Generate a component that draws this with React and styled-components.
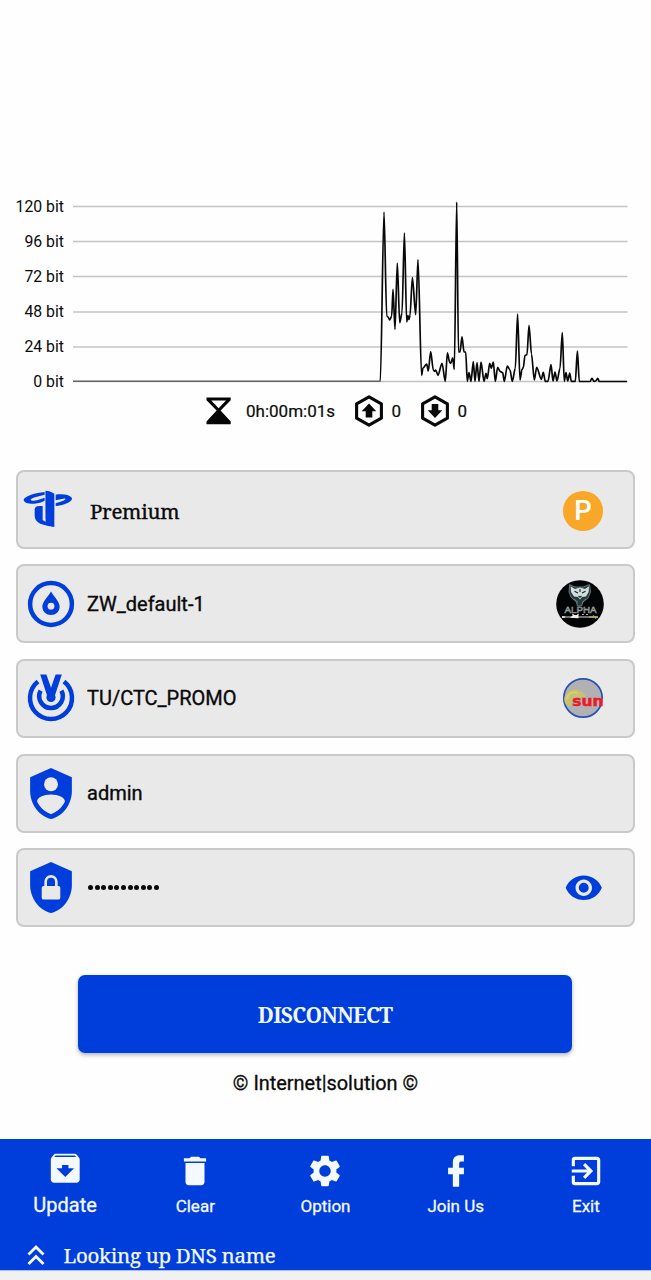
import React from "react";
import styled, { createGlobalStyle } from "styled-components";
import {
  MdArchive,
  MdDelete,
  MdSettings,
  MdExitToApp,
  MdRemoveRedEye,
  MdKeyboardDoubleArrowUp,
} from "react-icons/md";

const BLUE = "#003edb";
const SERIF = `"Noto Serif", "DejaVu Serif Condensed", "DejaVu Serif", serif`;

const GlobalStyle = createGlobalStyle`
  * { box-sizing: border-box; }
  body { margin: 0; background: #fefefe; color: #0a0a0a; font-family: Roboto, sans-serif; }
`;

const Screen = styled.div`
  display: flex;
  flex-direction: column;
  height: 1280px;
  overflow: hidden;
`;

const ChartArea = styled.section`
  display: flex;
  padding-top: 196px;
  height: 392px;
`;

const AxisLabels = styled.div`
  display: flex;
  flex-direction: column;
  width: 64px;
  margin-right: 8px;
  padding-top: 1px;
  height: 196px;
`;

const AxisLabel = styled.span`
  flex: none;
  height: 35.1px;
  line-height: 20px;
  font-size: 15.8px;
  text-align: right;
  white-space: nowrap;
`;

const Stats = styled.div`
  display: flex;
  align-items: center;
  height: 38px;
  padding-left: 205px;
  font-size: 17px;
  -webkit-text-stroke: 0.2px;
`;

const StatText = styled.span`
  width: ${(p) => p.$width}px;
  margin-left: ${(p) => p.$gap}px;
  white-space: nowrap;
`;

const Rows = styled.div`
  display: flex;
  flex-direction: column;
  gap: 15.7px;
  padding: 39.5px 16px 0;
`;

const Row = styled.div`
  display: flex;
  align-items: center;
  height: 79px;
  border: 2px solid #c9c9c9;
  border-radius: 8px;
  background: #e9e9e9;
`;

const RowIcon = styled.div`
  display: flex;
  justify-content: center;
  width: 66px;
  padding-right: ${(p) => p.$inset || 0}px;
  color: ${BLUE};
`;

const RowText = styled.span`
  flex: 1;
  padding-left: ${(p) => (p.$serif ? 6 : 3)}px;
  padding-top: ${(p) => (p.$serif ? 3 : 0)}px;
  font-family: ${(p) => (p.$serif ? SERIF : "inherit")};
  font-size: ${(p) => (p.$serif ? 20.5 : 20)}px;
  letter-spacing: ${(p) => p.$spacing || 0}px;
  -webkit-text-stroke: 0.35px;
  white-space: nowrap;
`;

const Dots = styled.span`
  display: flex;
  flex: 1;
  gap: 1.6px;
  padding-left: 4px;
`;

const Dot = styled.i`
  width: 5px;
  height: 5px;
  border-radius: 50%;
  background: #0a0a0a;
`;

const RowBadge = styled.div`
  display: flex;
  justify-content: center;
  width: 50px;
  margin-right: ${(p) => p.$right || 25}px;
  padding-top: ${(p) => p.$drop || 0}px;
  color: ${BLUE};
`;

const LetterBadge = styled.div`
  display: flex;
  align-items: center;
  justify-content: center;
  width: 40px;
  height: 40px;
  border-radius: 50%;
  background: #f8a728;
  color: #fff;
  font-size: 27.5px;
  font-weight: 500;
`;

const Disconnect = styled.button`
  flex: none;
  width: 494px;
  height: 78px;
  margin: 48px 0 0 78px;
  padding: 1px 0 0;
  border: 0;
  border-radius: 7px;
  background: ${BLUE};
  box-shadow: 0 2px 4px rgba(0, 0, 0, 0.3);
  color: #f0f8ff;
  font-family: ${SERIF};
  font-size: 21px;
  font-weight: 700;
  letter-spacing: -0.75px;
`;

const Credit = styled.div`
  margin-top: 18px;
  height: 24px;
  line-height: 25px;
  text-align: center;
  font-size: 19.9px;
  -webkit-text-stroke: 0.3px;
`;

const Footer = styled.footer`
  display: flex;
  flex-direction: column;
  flex: none;
  height: 131px;
  margin-top: auto;
  background: ${BLUE};
  color: #f4f9ff;
`;

const Nav = styled.nav`
  display: grid;
  grid-template-columns: repeat(5, 1fr);
  height: 98px;
`;

const NavItem = styled.div`
  display: flex;
  flex-direction: column;
  align-items: center;
  padding-top: ${(p) => (p.$large ? 9.5 : 12)}px;
  font-size: ${(p) => (p.$large ? 20 : 17)}px;
  line-height: 24px;
  -webkit-text-stroke: 0.3px;
`;

const NavIcon = styled.span`
  display: flex;
  align-items: center;
  justify-content: center;
  height: 39px;
  margin-bottom: ${(p) => (p.$large ? 5.5 : 4)}px;
`;

const Status = styled.div`
  display: flex;
  align-items: center;
  height: 33px;
  padding: 3px 0 0 18.5px;
  font-family: ${SERIF};
  font-size: 20.5px;
  letter-spacing: -0.3px;
  -webkit-text-stroke: 0.25px;
`;

const StatusText = styled.span`
  margin-left: 11px;
  white-space: nowrap;
`;

const SystemBar = styled.div`
  flex: none;
  height: 10px;
  background: #f1f1f2;
  border-top: 1px solid #a9bdf0;
`;

const SAMPLES = [
  [380.3, 381.3], [384, 212], [386.7, 316], [388, 317], [389.7, 320], [391.7, 316],
  [393, 289.3], [395, 329.3], [397.3, 263], [399.7, 322.7], [402, 313], [404.4, 233],
  [406.7, 322], [408, 315.5], [409, 319.5], [410, 315.3], [412.4, 277.5], [415.7, 314.7],
  [418, 259.5], [421.6, 375.5], [423, 368], [426.7, 364], [428.3, 371], [430.7, 351.5],
  [433.3, 370], [434.7, 371.3], [435.7, 370], [438, 375.3], [442, 363.3], [445.3, 381.3],
  [447.4, 352.8], [449.7, 362.5], [450.7, 363.3], [452.7, 357.8], [454.3, 369.3],
  [456.7, 202], [458.5, 352], [460, 352], [462, 336.8], [464, 352], [465.7, 352],
  [467.3, 381.3], [469, 372.7], [471, 381.3], [473.3, 361.5], [475, 381.3], [477, 362.7],
  [479, 381.3], [481, 362], [484, 381.3], [486, 373.3], [487.3, 378.7], [489.7, 363.3],
  [491.3, 368.3], [493.3, 362], [495.3, 381.3], [497.7, 367.3], [500, 371.3],
  [502.7, 372.7], [504.3, 381.5], [507.3, 366], [510, 370], [512.3, 381.5],
  [515.3, 368.3], [517.6, 314], [520, 380], [522, 369.3], [523.3, 367.7], [525, 355.3],
  [527, 354.7], [529, 325.3], [531.5, 354], [534.3, 380], [536.7, 367.3], [541.3, 379.3],
  [543.3, 372.3], [545.3, 381.3], [548, 381.3], [551, 364.7], [553, 381], [555, 372],
  [557, 381], [560, 368.3], [562.3, 332.7], [564.3, 381.3], [566, 372.7], [567.7, 381],
  [569.7, 373], [571.3, 381.3], [575.3, 381.3], [577.4, 351], [579.3, 381.5],
  [590, 381.5], [592, 378.3], [594, 381.5], [595.7, 381], [597.7, 378.3], [599.3, 381.5],
  [627, 381.5],
];

// Joins samples with cubics whose control points sit part-way between neighbours.
const tracePath = SAMPLES.reduce((d, [x, y], i) => {
  if (i === 0) return `M${x} ${y}`;
  const [px, py] = SAMPLES[i - 1];
  const h = (x - px) * 0.3;
  return `${d}C${px + h} ${py} ${x - h} ${y} ${x} ${y}`;
}, "");

const GRID = [206.5, 241.5, 276.5, 312, 347, 381.5];

function TrafficChart() {
  return (
    <ChartArea>
      <AxisLabels>
        {[120, 96, 72, 48, 24, 0].map((n) => (
          <AxisLabel key={n}>{n} bit</AxisLabel>
        ))}
      </AxisLabels>
      <svg width="556" height="192" viewBox="72 196 556 192">
        {GRID.map((y) => (
          <path key={y} d={`M73 ${y}H627.5`} stroke="#c4c4c4" strokeWidth="1.3" />
        ))}
        <path d="M73 381.3H380.5" stroke="#666" strokeWidth="1.6" />
        <path d={tracePath} fill="none" stroke="#080808" strokeWidth="1.7" strokeLinejoin="round" />
      </svg>
    </ChartArea>
  );
}

const Hourglass = () => (
  <svg width="27" height="30" viewBox="0 0 27 30">
    <path d="M1.5 1.5H25.7V4.2L15.6 14.6 25.7 25.6V28.3H1.5V25.6L11.6 14.6 1.5 4.2Z" fill="#050505" />
    <path d="M6.2 4.4H21L13.6 12.2Z" fill="#fefefe" />
  </svg>
);

const HexArrow = ({ down }) => (
  <svg width="30" height="32" viewBox="0 0 30 32">
    <path d="M15 1.9 27.4 8.8V23.2L15 30.1 2.6 23.2V8.8Z" fill="none" stroke="#080808" strokeWidth="3.1" strokeLinejoin="round" />
    <path d="M15 8.6 22.3 16.3H18.3V22.5H11.7V16.3H7.7Z" fill="#080808" transform={down ? "rotate(180 15 15.8)" : undefined} />
  </svg>
);

const PremiumLogo = () => (
  <svg width="50" height="38" viewBox="69 90 150 114" fill="currentColor">
    <path d="M134 96C108 98 72 109 71 119C71 129 88 132 103 131C115 130 126 126 134 122V113L111 121C104 123 93 123 92 119C92 116 101 113 108 111L134 104Z" />
    <path d="M137 92C147 93 157 96 163 101V201C155 200 146 199 137 196C111 190 104 180 104 164V148C105 141 110 138 118 138H128V180L137 185Z" />
    <path d="M137 92L150 95V154C150 165 145 173 137 178Z" />
    <path d="M167 104C185 101 215 105 216 116C216 127 187 136 167 138V130L190 122C198 119 199 115 190 116L167 121Z" />
    <path d="M132 138V181" stroke="#e9e9e9" strokeWidth="4" />
  </svg>
);

const DropIcon = () => (
  <svg width="48" height="48" viewBox="0 0 48 48">
    <circle cx="24" cy="24" r="20.9" fill="none" stroke="currentColor" strokeWidth="4.5" />
    <path d="M24 11.5C21 17 15.3 21.2 15.3 27A8.7 8 0 0 0 32.7 27C32.7 21.2 27 17 24 11.5Z" fill="currentColor" />
    <circle cx="24" cy="26.2" r="3.4" fill="#e9e9e9" />
  </svg>
);

const SignalIcon = () => (
  <svg width="48" height="50" viewBox="0 0 48 50" fill="none" stroke="currentColor">
    <path d="M11 8.6A21 21 0 1 0 37 8.6" strokeWidth="4.5" />
    <path d="M13.6 17.6A11.8 11.8 0 1 0 34.4 17.6" strokeWidth="4.5" />
    <path d="M13.2 1.4H19.4L24 14.8 28.6 1.4H34.8L27.6 23.5H20.4Z" fill="currentColor" stroke="none" />
    <circle cx="24" cy="24.4" r="4.6" fill="currentColor" stroke="none" />
  </svg>
);

const SHIELD = "M12 1L3 5V11C3 16.55 6.84 21.74 12 23C17.16 21.74 21 16.55 21 11V5L12 1Z";

const ShieldUser = () => (
  <svg width="42" height="51" viewBox="3 1 18 22">
    <path d={SHIELD} fill="currentColor" />
    <circle cx="12" cy="8" r="3" fill="#e9e9e9" />
    <path d="M17.13 17C15.92 18.85 14.11 20.24 12 20.92C9.89 20.24 8.08 18.85 6.87 17C6.53 16.5 6.24 16 6 15.47C6 13.82 8.71 12.47 12 12.47C15.29 12.47 18 13.79 18 15.47C17.76 16 17.47 16.5 17.13 17Z" fill="#e9e9e9" />
  </svg>
);

const ShieldLock = () => (
  <svg width="42" height="51" viewBox="3 1 18 22">
    <path d={SHIELD} fill="currentColor" />
    <rect x="8" y="11.3" width="8" height="5.9" rx="0.8" fill="#e9e9e9" />
    <path d="M9.7 11.5V9.5A2.3 2.3 0 0 1 14.3 9.5V11.5" fill="none" stroke="#e9e9e9" strokeWidth="1.15" />
  </svg>
);

const AlphaBadge = () => (
  <svg width="48" height="48" viewBox="0 0 48 48">
    <circle cx="24" cy="24" r="23.8" fill="#030405" />
    <path d="M13.6 4.6L19 7H27L33.5 4.6 34.6 12 32 18 27 22 25.5 26H21.5L20 21.5 15.2 17.5 13 12Z" fill="#263b3d" stroke="#759295" strokeWidth="0.8" />
    <path d="M14.6 6.3L19 9 24 7.4 29 9 33 6.3 32.7 12 30 16.4 26 17 24 19.5 22 17 18 16.4 15 12Z" fill="#d2dedb" />
    <path d="M18.5 11.2L22 13M29.5 11.2L26 13M24 9V12M22.5 15.8L24 17.2 25.5 15.8" stroke="#162022" strokeWidth="1.1" fill="none" />
    <path d="M18 19L22 22.5M30 19L26 22.5" stroke="#6b8487" strokeWidth="1" />
    <text x="24.5" y="32.6" textAnchor="middle" textLength="32" lengthAdjust="spacingAndGlyphs" fontFamily="Liberation Sans" fontSize="9.5" fill="#202426" stroke="#9ba0a1" strokeWidth="0.6">ALPHA</text>
    <path d="M6 37H42" stroke="#dadcd0" strokeWidth="1.2" />
    <path d="M16 34.5H18M21 34.5H23M26 34.5H28M30 34.5H32" stroke="#aaa" strokeWidth="1.1" />
    <path d="M14 37.8L17 35H22.5V38.2ZM6 36.2H9V37.8H6Z" fill="#eee" />
    <path d="M33 37H42M37 35.5L40 38.5" stroke="#a7b45d" strokeWidth="1.3" />
  </svg>
);

const SunBadge = () => (
  <svg width="42" height="42" viewBox="0 0 42 42">
    <circle cx="21" cy="21" r="19.2" fill="#b1b1b3" stroke="#2850b8" strokeWidth="1.7" />
    <path d="M2.2 23C2 16 8 11.7 14 12.5C19 13.1 23 16.5 24 20H11L8.5 30C4.7 29 2.4 26.5 2.2 23Z" fill="#c9c26b" />
    <path d="M4.5 23C5 17 11 14 16 16" stroke="#d8d07e" strokeWidth="1.5" fill="none" />
    <text x="10.2" y="29" textLength="31.3" lengthAdjust="spacingAndGlyphs" fontFamily="DejaVu Sans" fontWeight="700" fontSize="13.5" fill="#ec1c24" stroke="#ec1c24" strokeWidth="0.5">sun</text>
  </svg>
);

const FacebookMark = () => (
  <svg width="38" height="38" viewBox="0 0 24 24" fill="currentColor">
    <path d="M17 2V6H15C14.31 6 14 6.81 14 7.5V10H17V14H14V22H10V14H7V10H10V6A4 4 0 0 1 14 2H17Z" />
  </svg>
);

const NAV = [
  { label: "Update", icon: <MdArchive size={38.5} />, large: true },
  { label: "Clear", icon: <MdDelete size={38} /> },
  { label: "Option", icon: <MdSettings size={38} /> },
  { label: "Join Us", icon: <FacebookMark /> },
  { label: "Exit", icon: <MdExitToApp size={38} /> },
];

export default function App() {
  return (
    <Screen>
      <GlobalStyle />
      <TrafficChart />
      <Stats>
        <Hourglass />
        <StatText $gap={14} $width={108}>0h:00m:01s</StatText>
        <HexArrow />
        <StatText $gap={7.5} $width={28.5}>0</StatText>
        <HexArrow down />
        <StatText $gap={7.5} $width={20}>0</StatText>
      </Stats>
      <Rows>
        <Row>
          <RowIcon $inset={6}><PremiumLogo /></RowIcon>
          <RowText $serif $spacing={-0.3}>Premium</RowText>
          <RowBadge $drop={3}><LetterBadge>P</LetterBadge></RowBadge>
        </Row>
        <Row>
          <RowIcon><DropIcon /></RowIcon>
          <RowText>ZW_default-1</RowText>
          <RowBadge $right={28}><AlphaBadge /></RowBadge>
        </Row>
        <Row>
          <RowIcon><SignalIcon /></RowIcon>
          <RowText>TU/CTC_PROMO</RowText>
          <RowBadge><SunBadge /></RowBadge>
        </Row>
        <Row>
          <RowIcon><ShieldUser /></RowIcon>
          <RowText>admin</RowText>
        </Row>
        <Row>
          <RowIcon><ShieldLock /></RowIcon>
          <Dots>
            {Array.from({ length: 11 }, (_, i) => <Dot key={i} />)}
          </Dots>
          <RowBadge $right={24.3}><MdRemoveRedEye size={39.5} /></RowBadge>
        </Row>
      </Rows>
      <Disconnect>DISCONNECT</Disconnect>
      <Credit>© Internet|solution ©</Credit>
      <Footer>
        <Nav>
          {NAV.map((item) => (
            <NavItem key={item.label} $large={item.large}>
              <NavIcon $large={item.large}>{item.icon}</NavIcon>
              {item.label}
            </NavItem>
          ))}
        </Nav>
        <Status>
          <MdKeyboardDoubleArrowUp size={34} />
          <StatusText>Looking up DNS name</StatusText>
        </Status>
      </Footer>
      <SystemBar />
    </Screen>
  );
}
